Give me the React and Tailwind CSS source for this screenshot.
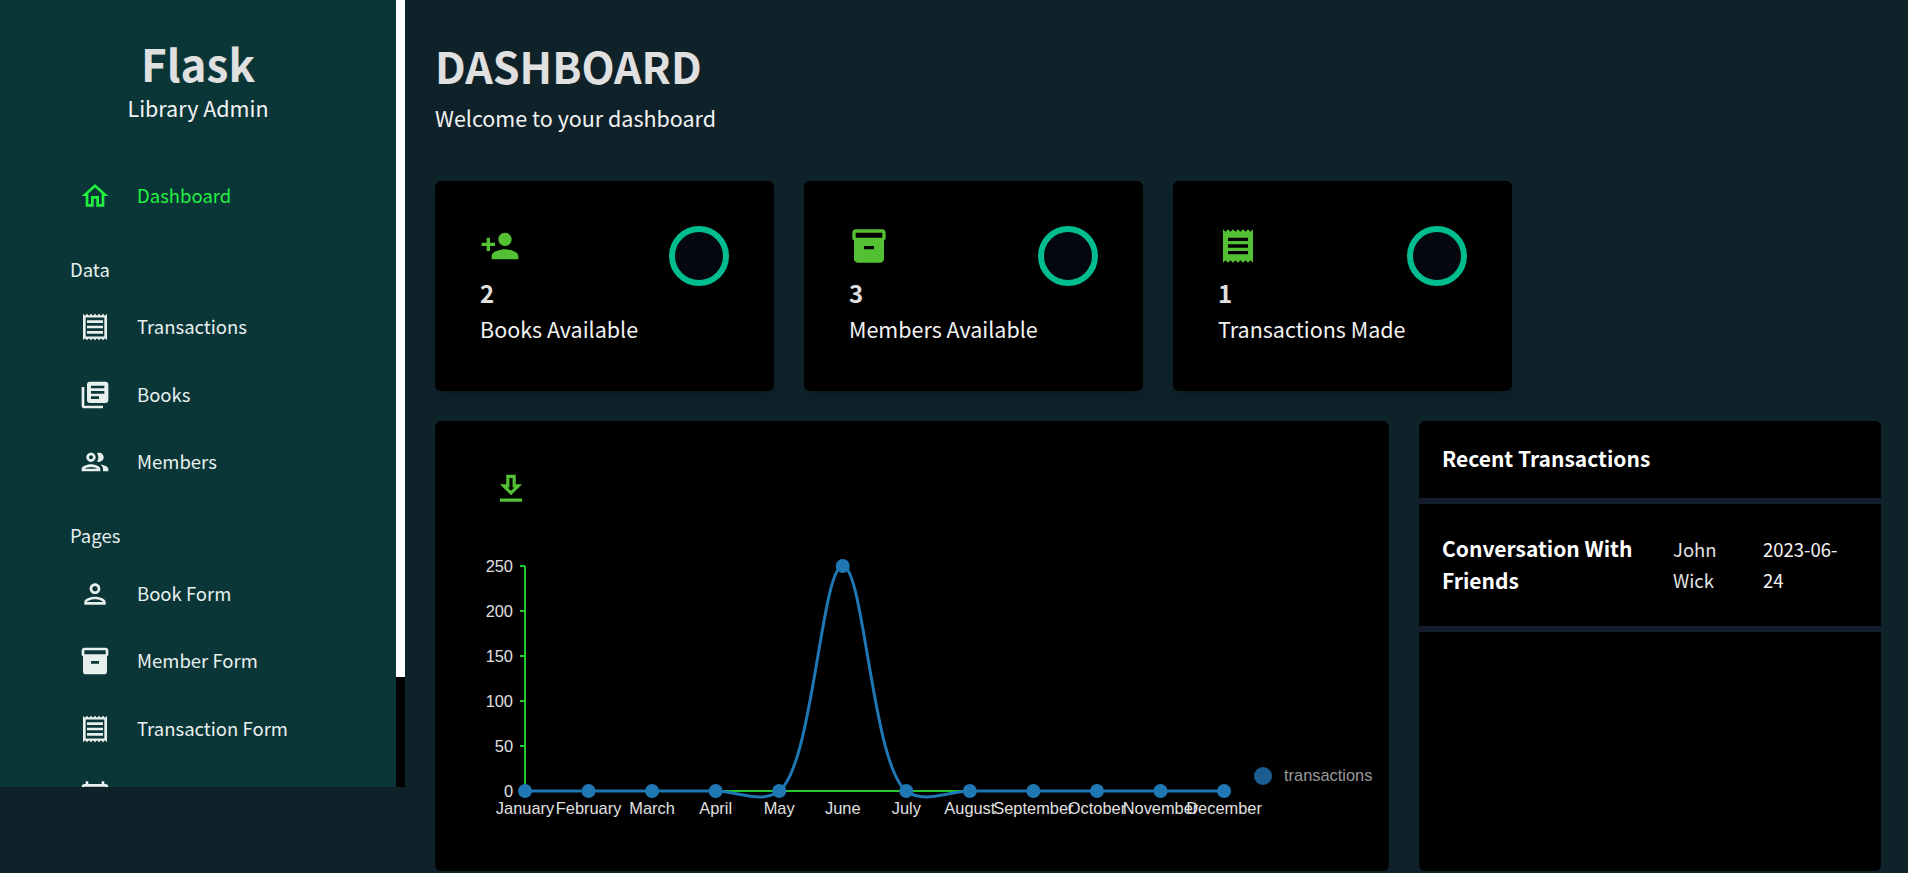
import React from 'react';
import {
  MdOutlineHome, MdOutlineReceipt, MdLibraryBooks, MdOutlinePeople, MdOutlinePerson,
  MdInventory2, MdOutlineCalendarToday, MdPersonAdd, MdReceipt,
} from 'react-icons/md';

const MONTHS = ['January', 'February', 'March', 'April', 'May', 'June', 'July', 'August', 'September', 'October', 'November', 'December'];
const VALUES = [0, 0, 0, 0, 0, 250, 0, 0, 0, 0, 0, 0];
const TICKS = [0, 50, 100, 150, 200, 250];

const X0 = 525;
const STEP = 63.55;
const Y0 = 791;
const yOf = (v) => Y0 - v * 0.9;
const POINTS = VALUES.map((v, i) => [X0 + i * STEP, yOf(v)]);

// centripetal catmull-rom, same curve the chart lib draws
function curvePath(pts) {
  const dist = (a, b) => Math.sqrt(Math.hypot(a[0] - b[0], a[1] - b[1]));
  let d = `M${pts[0][0]},${pts[0][1]}`;
  for (let i = 0; i < pts.length - 1; i++) {
    const p0 = pts[i - 1];
    const p1 = pts[i];
    const p2 = pts[i + 1];
    const p3 = pts[i + 2];
    const l12 = dist(p1, p2);
    let c1 = p1;
    let c2 = p2;
    if (p0) {
      const l01 = dist(p0, p1);
      const a = 2 * l01 * l01 + 3 * l01 * l12 + l12 * l12;
      const n = 3 * l01 * (l01 + l12);
      c1 = [0, 1].map((k) => (p1[k] * a - p0[k] * l12 * l12 + p2[k] * l01 * l01) / n);
    }
    if (p3) {
      const l23 = dist(p2, p3);
      const b = 2 * l23 * l23 + 3 * l23 * l12 + l12 * l12;
      const m = 3 * l23 * (l23 + l12);
      c2 = [0, 1].map((k) => (p2[k] * b + p1[k] * l23 * l23 - p3[k] * l12 * l12) / m);
    }
    d += `C${c1[0]},${c1[1]} ${c2[0]},${c2[1]} ${p2[0]},${p2[1]}`;
  }
  return d;
}

function DownloadIcon() {
  return (
    <svg viewBox="0 0 24 24" width={38} height={38} fill="currentColor">
      <path d="M19 9h-4V3H9v6H5l7 7 7-7zm-8 2V5h2v6h1.17L12 13.17 9.83 11H11zm-6 7h14v2H5z" />
    </svg>
  );
}

function NavItem({ icon: Icon, label, active }) {
  return (
    <div className={`flex h-[67.5px] shrink-0 items-center pl-[79px] ${active ? 'text-[#22f040]' : 'text-[#e8f0ee]'}`}>
      <Icon size={32} className="shrink-0" />
      <span className="ml-[26px] pb-[2px] text-[18.5px] leading-6">{label}</span>
    </div>
  );
}

function NavLabel({ children }) {
  return <p className="h-[64px] shrink-0 pl-[70px] pt-[27px] text-[18.5px] leading-6 text-[#e8f0ee]">{children}</p>;
}

function StatCard({ icon: Icon, value, label }) {
  return (
    <div className="col-span-3 rounded-md bg-black px-[45px] pt-[45px] shadow-lg">
      <div className="flex items-start justify-between">
        <div>
          <Icon size={40} className="text-[#54c134]" />
          <p className="mt-[11px] text-[24px] leading-8 font-bold text-[#e0e0e0]">{value}</p>
        </div>
        <div className="h-[60px] w-[60px] rounded-full border-[6px] border-[#00bd8f] bg-[#04070e]" />
      </div>
      <p className="mt-[4px] text-[21.5px] leading-8 text-[#f2f2f2]">{label}</p>
    </div>
  );
}

function TransactionsChart() {
  return (
    <svg viewBox="435 508 954 363" className="block h-[363px] w-[954px] font-['Liberation_Sans',sans-serif]">
      <line x1={525} y1={566} x2={525} y2={Y0} stroke="#25c832" strokeWidth={2} />
      <line x1={X0} y1={Y0} x2={X0 + 11 * STEP} y2={Y0} stroke="#25c832" strokeWidth={2} />
      {TICKS.map((t) => (
        <g key={t}>
          <line x1={520} y1={yOf(t)} x2={525} y2={yOf(t)} stroke="#25c832" strokeWidth={2} />
          <text x={513} y={yOf(t) + 6} textAnchor="end" fontSize={16.4} fill="#e0e0e0">{t}</text>
        </g>
      ))}
      {MONTHS.map((m, i) => (
        <text key={m} x={X0 + i * STEP} y={814} textAnchor="middle" fontSize={16.4} fill="#e0e0e0">{m}</text>
      ))}
      <path d={curvePath(POINTS)} fill="none" stroke="#1f77b4" strokeWidth={3} />
      {POINTS.map(([x, y]) => (
        <circle key={x} cx={x} cy={y} r={7} fill="#1f77b4" />
      ))}
      <circle cx={1263} cy={776} r={9} fill="#195e8f" />
      <text x={1284} y={781} fontSize={16.4} fill="#999999">transactions</text>
    </svg>
  );
}

export default function App() {
  return (
    <div className="flex h-screen items-start overflow-hidden bg-[#0f2129] font-['Noto_Sans_CJK_SC',sans-serif]">
      <div className="flex h-[787px] w-[405px] shrink-0">
        <aside className="flex h-full w-[396px] shrink-0 flex-col overflow-hidden bg-[#0a3638]">
          <div className="h-[162px] shrink-0 pt-[33px] text-center">
            <h1 className="text-[44px] leading-[60px] font-bold text-[#e0e0e0]">Flask</h1>
            <p className="-mt-[1px] text-[21.5px] leading-8 text-[#f2f2f2]">Library Admin</p>
          </div>
          <NavItem icon={MdOutlineHome} label="Dashboard" active />
          <NavLabel>Data</NavLabel>
          <NavItem icon={MdOutlineReceipt} label="Transactions" />
          <NavItem icon={MdLibraryBooks} label="Books" />
          <NavItem icon={MdOutlinePeople} label="Members" />
          <NavLabel>Pages</NavLabel>
          <NavItem icon={MdOutlinePerson} label="Book Form" />
          <NavItem icon={MdInventory2} label="Member Form" />
          <NavItem icon={MdOutlineReceipt} label="Transaction Form" />
          <NavItem icon={MdOutlineCalendarToday} label="Calendar" />
        </aside>
        <div className="flex h-full w-[9px] shrink-0 flex-col bg-black">
          <div className="h-[677px] bg-white" />
        </div>
      </div>

      <main className="min-w-0 flex-1 pr-[27px] pl-[30px]">
        <div className="h-[181px] pt-[38px]">
          <h2 className="text-[43px] leading-[54px] font-bold text-[#e0e0e0]">DASHBOARD</h2>
          <p className="mt-[10px] text-[21.5px] leading-8 text-[#f2f2f2]">Welcome to your dashboard</p>
        </div>

        <div className="grid grid-cols-12 auto-rows-[210px] gap-[30px]">
          <StatCard icon={MdPersonAdd} value="2" label="Books Available" />
          <StatCard icon={MdInventory2} value="3" label="Members Available" />
          <StatCard icon={MdReceipt} value="1" label="Transactions Made" />
          <div className="col-span-3" />

          <div className="col-span-8 row-span-2 overflow-hidden rounded-md bg-black pt-[49px]">
            <div className="pl-[57px] text-[#54c134]">
              <DownloadIcon />
            </div>
            <TransactionsChart />
          </div>

          <div className="col-span-4 row-span-2 overflow-hidden rounded-md bg-black">
            <div className="flex h-[83px] items-center border-b-[6px] border-[#141b2d] px-[23px] pb-[4px]">
              <h3 className="text-[21px] leading-8 font-semibold text-white">Recent Transactions</h3>
            </div>
            <div className="flex h-[128px] items-center border-b-[6px] border-[#141b2d] px-[23px]">
              <p className="w-[231px] shrink-0 pr-[10px] pb-[2px] text-[21px] leading-8 font-semibold text-white">Conversation With Friends</p>
              <p className="w-[90px] shrink-0 pr-[30px] text-[18.5px] leading-[31px] text-[#e0e0e0]">John Wick</p>
              <p className="w-[80px] shrink-0 text-[18.5px] leading-[31px] text-[#f2f2f2]">2023-06-24</p>
            </div>
          </div>
        </div>
      </main>
    </div>
  );
}
